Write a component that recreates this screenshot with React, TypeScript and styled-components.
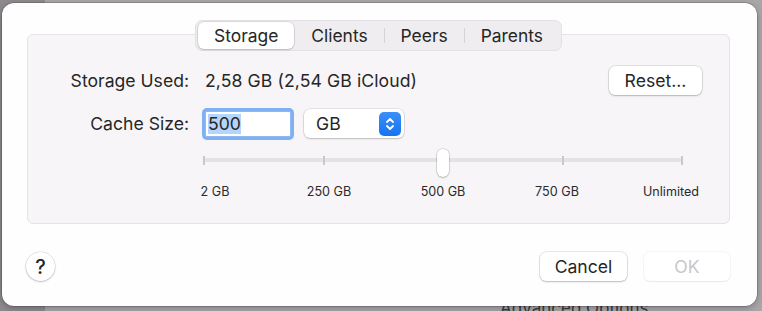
import React from 'react';
import styled, { createGlobalStyle } from 'styled-components';

const GlobalStyle = createGlobalStyle`
  html, body {
    margin: 0;
    padding: 0;
  }
  body {
    font-family: Inter, "Liberation Sans", sans-serif;
    color: #262626;
  }
`;

const Backdrop = styled.div`
  width: 762px;
  height: 311px;
  overflow: hidden;
  display: flex;
  flex-direction: column;
  box-sizing: border-box;
  padding: 3px 5px 0 2px;
  background: linear-gradient(to right, #8d898d 0, #8d898d 45px, #a9a5a9 45px);
`;

const Dialog = styled.div`
  height: 303px;
  flex-shrink: 0;
  box-sizing: border-box;
  background: #fefefe;
  border-radius: 12px;
  box-shadow: 0 0 0 0.5px rgba(0, 0, 0, 0.3), 0 2px 6px rgba(0, 0, 0, 0.25);
  padding: 17px 27px 0 25px;
  display: flex;
  flex-direction: column;
  position: relative;
  z-index: 1;
`;

const BehindText = styled.div`
  margin: -8px 0 0 498px;
  font-size: 17px;
  line-height: 20px;
  color: #3a3a3a;
  white-space: nowrap;
`;

const TabBar = styled.div`
  align-self: center;
  display: flex;
  align-items: center;
  height: 31px;
  box-sizing: border-box;
  padding: 0 2px;
  margin-bottom: -17px;
  background: #efedef;
  border: 1px solid #e4e1e4;
  border-radius: 7px;
  position: relative;
  z-index: 1;
`;

const Tab = styled.div<{ $active?: boolean }>`
  height: 27px;
  display: flex;
  align-items: center;
  padding: 0 16px;
  font-size: 17.4px;
  border-radius: 6px;
  background: ${(p) => (p.$active ? '#ffffff' : 'transparent')};
  box-shadow: ${(p) =>
    p.$active ? '0 0 0 0.5px rgba(0,0,0,0.14), 0 1px 2px rgba(0,0,0,0.16)' : 'none'};
`;

const TabDivider = styled.div<{ $hidden?: boolean }>`
  width: 1px;
  height: 15px;
  background: ${(p) => (p.$hidden ? 'transparent' : '#d6d3d6')};
`;

const GroupBox = styled.div`
  height: 190px;
  box-sizing: border-box;
  background: #f7f5f7;
  border: 1px solid #e6e2e6;
  border-radius: 6px;
  padding: 31px 27px 0 0;
  display: flex;
  flex-direction: column;
`;

const FormRow = styled.div<{ $gap?: number }>`
  display: flex;
  align-items: center;
  height: 29px;
  margin-top: ${(p) => p.$gap ?? 0}px;
`;

const FieldLabel = styled.div`
  width: 161px;
  margin-right: 16px;
  text-align: right;
  font-size: 17.6px;
  white-space: nowrap;
`;

const ValueText = styled.div`
  font-size: 17.6px;
  letter-spacing: 0.1px;
  white-space: nowrap;
`;

const PushButton = styled.div<{ $width: number; $disabled?: boolean }>`
  width: ${(p) => p.$width}px;
  height: 29px;
  display: flex;
  align-items: center;
  justify-content: center;
  font-size: 17.6px;
  border-radius: 6px;
  background: #ffffff;
  color: ${(p) => (p.$disabled ? '#c8c6c8' : '#262626')};
  box-shadow: ${(p) =>
    p.$disabled
      ? '0 0 0 0.5px rgba(0,0,0,0.06), 0 1px 1.5px rgba(0,0,0,0.06)'
      : '0 0 0 0.5px rgba(0,0,0,0.16), 0 1px 2px rgba(0,0,0,0.2)'};
`;

const ResetButton = styled(PushButton)`
  margin-left: auto;
`;

const TextField = styled.div`
  width: 86px;
  height: 26px;
  box-sizing: border-box;
  background: #ffffff;
  border: 1px solid #8fb9f4;
  box-shadow: 0 0 0 3px #7fb0f2;
  border-radius: 2px;
  display: flex;
  align-items: center;
  padding-left: 2px;
  font-size: 17.6px;
`;

const Selected = styled.span`
  background: #b5d5fd;
  line-height: 20px;
`;

const PopUp = styled.div`
  margin-left: 13px;
  width: 100px;
  height: 29px;
  box-sizing: border-box;
  display: flex;
  align-items: center;
  justify-content: space-between;
  padding: 0 3px 0 12px;
  background: #ffffff;
  border-radius: 6px;
  box-shadow: 0 0 0 0.5px rgba(0, 0, 0, 0.14), 0 1px 2px rgba(0, 0, 0, 0.18);
  font-size: 17.6px;
`;

const Stepper = styled.div`
  width: 22px;
  height: 24px;
  border-radius: 5px;
  background: linear-gradient(#3a8ff9, #1674f2);
  display: flex;
  align-items: center;
  justify-content: center;
`;

const SliderArea = styled.div`
  position: relative;
  margin: 11px 0 0 176px;
  width: 478px;
  height: 28px;
`;

const Track = styled.div`
  position: absolute;
  left: 0;
  right: 0;
  top: 9px;
  height: 4px;
  border-radius: 2px;
  background: #e5e2e5;
`;

const Tick = styled.div`
  position: absolute;
  top: 7px;
  width: 2px;
  height: 9px;
  margin-left: -1px;
  background: #cbc8cb;
`;

const Thumb = styled.div`
  position: absolute;
  top: 0;
  width: 12px;
  height: 28px;
  margin-left: -6px;
  box-sizing: border-box;
  background: #ffffff;
  border-radius: 6px 6px 7px 7px;
  box-shadow: 0 0 0 0.5px rgba(0, 0, 0, 0.18), 0 1px 2px rgba(0, 0, 0, 0.2);
`;

const TickLabels = styled.div`
  display: grid;
  grid-template-columns: repeat(5, 114px);
  margin: 7px 0 0 130px;
`;

const TickLabel = styled.div`
  text-align: center;
  font-size: 12.6px;
  line-height: 16px;
  color: #2a2a2a;
`;

const Footer = styled.div`
  display: flex;
  align-items: center;
  gap: 17px;
  margin: 28px 0 0 -1px;
`;

const HelpButton = styled.div`
  width: 29px;
  height: 29px;
  border-radius: 50%;
  background: #ffffff;
  box-shadow: 0 0 0 0.5px rgba(0, 0, 0, 0.16), 0 1px 2px rgba(0, 0, 0, 0.2);
  display: flex;
  align-items: center;
  justify-content: center;
  font-size: 20px;
  font-weight: 500;
  margin-right: auto;
`;

const tabs = ['Storage', 'Clients', 'Peers', 'Parents'];
const ticks = ['2 GB', '250 GB', '500 GB', '750 GB', 'Unlimited'];

const App = () => {
  const sliderIndex = 2;
  return (
    <>
      <GlobalStyle />
      <Backdrop>
        <Dialog>
          <TabBar>
            {tabs.map((t, i) => (
              <React.Fragment key={t}>
                {i > 0 && <TabDivider $hidden={i === 1} />}
                <Tab $active={i === 0}>{t}</Tab>
              </React.Fragment>
            ))}
          </TabBar>
          <GroupBox>
            <FormRow>
              <FieldLabel>Storage Used:</FieldLabel>
              <ValueText>2,58 GB (2,54 GB iCloud)</ValueText>
              <ResetButton $width={93}>Reset...</ResetButton>
            </FormRow>
            <FormRow $gap={14}>
              <FieldLabel>Cache Size:</FieldLabel>
              <TextField>
                <Selected>500</Selected>
              </TextField>
              <PopUp>
                GB
                <Stepper>
                  <svg width="10" height="16" viewBox="0 0 10 16" fill="none">
                    <path d="M2 6 L5 3 L8 6" stroke="#fff" strokeWidth="1.8" strokeLinecap="round" strokeLinejoin="round" />
                    <path d="M2 10 L5 13 L8 10" stroke="#fff" strokeWidth="1.8" strokeLinecap="round" strokeLinejoin="round" />
                  </svg>
                </Stepper>
              </PopUp>
            </FormRow>
            <SliderArea>
              <Track />
              {ticks.map((t, i) => (
                <Tick key={t} style={{ left: `${(i / (ticks.length - 1)) * 100}%` }} />
              ))}
              <Thumb style={{ left: `${(sliderIndex / (ticks.length - 1)) * 100}%` }} />
            </SliderArea>
            <TickLabels>
              {ticks.map((t) => (
                <TickLabel key={t}>{t}</TickLabel>
              ))}
            </TickLabels>
          </GroupBox>
          <Footer>
            <HelpButton>?</HelpButton>
            <PushButton $width={87}>Cancel</PushButton>
            <PushButton $width={86} $disabled>
              OK
            </PushButton>
          </Footer>
        </Dialog>
        <BehindText>Advanced Options...</BehindText>
      </Backdrop>
    </>
  );
};

export default App;
